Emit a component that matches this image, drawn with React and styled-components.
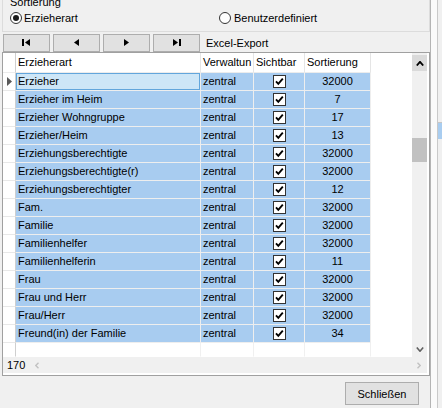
import React from "react";
import styled, { createGlobalStyle } from "styled-components";

const GlobalStyle = createGlobalStyle`
  html, body {
    margin: 0;
    padding: 0;
    background: #f0f0f0;
    font-family: "Liberation Sans", Arial, sans-serif;
    font-size: 11px;
    color: #000;
    overflow: hidden;
  }
`;

const Page = styled.div`
  display: flex;
  width: 442px;
  height: 408px;
  overflow: hidden;
`;

const Main = styled.div`
  width: 430px;
  display: flex;
  flex-direction: column;
`;

const SideStrip = styled.div`
  width: 12px;
  display: flex;
  border-left: 1px solid #b4b4b4;
  box-sizing: border-box;
`;

const StripLight = styled.div`
  width: 6px;
  background: #fafafa;
  border-right: 1px solid #c9c9c9;
`;

const StripRest = styled.div`
  flex: 1;
  background: #f0f0f0;
  padding-top: 122px;
`;

const StripSelection = styled.div`
  height: 16px;
  border-top: 1px solid #c6c6c6;
  background: #a9cdf0;
`;

const GroupBox = styled.div`
  margin-left: 2px;
  width: 428px;
  height: 32px;
  box-sizing: border-box;
  border: 1px solid #dcdcdc;
  border-top: none;
  padding-left: 7px;
  overflow: hidden;
`;

const GroupTitle = styled.div`
  line-height: 12px;
  margin-top: -4px;
`;

const RadioRow = styled.div`
  display: grid;
  grid-template-columns: 209px 1fr;
  margin-top: 4px;
  height: 12px;
`;

const RadioOption = styled.label`
  display: flex;
  align-items: center;
  gap: ${(p) => p.$gap}px;
  line-height: 12px;
`;

const RadioCircle = styled.span`
  width: 12px;
  height: 12px;
  box-sizing: border-box;
  border-radius: 50%;
  border: 1px solid #333;
  background: #fff;
  display: flex;
  align-items: center;
  justify-content: center;

  &::after {
    content: "";
    width: 6px;
    height: 6px;
    border-radius: 50%;
    background: ${(p) => (p.$checked ? "#1b1b1b" : "transparent")};
  }
`;

const NavRow = styled.div`
  display: flex;
  align-items: center;
  gap: 3px;
  height: 20px;
  padding: 1px 0 0 3px;
  box-sizing: border-box;
`;

const NavButton = styled.button`
  width: 47px;
  height: 18px;
  padding: 0;
  margin: 0;
  border: 1px solid #adadad;
  background: #e1e1e1;
  display: flex;
  align-items: center;
  justify-content: center;
`;

const ExportLabel = styled.span`
  margin-left: 3px;
  line-height: 18px;
`;

const GridFrame = styled.div`
  margin-left: 2px;
  width: 428px;
  height: 324px;
  box-sizing: border-box;
  border: 1px solid #a0a0a0;
  background: #fff;
  display: flex;
  flex-direction: column;
`;

const GridBody = styled.div`
  display: flex;
  height: 304px;
`;

const Table = styled.div`
  width: 409px;
  display: grid;
  grid-template-columns: 13px 185px 53px 51px 66px;
  grid-auto-rows: 18px;
  grid-template-rows: 20px;
  align-content: start;
`;

const HeaderCell = styled.div`
  box-sizing: border-box;
  border-right: 1px solid ${(p) => (p.$rowHead ? "#cfcfcf" : "#e5e5e5")};
  border-bottom: 1px solid #ececec;
  background: #fff;
  padding-left: 2px;
  line-height: 19px;
  white-space: nowrap;
  overflow: hidden;
`;

const RowHead = styled.div`
  box-sizing: border-box;
  border-right: 1px solid #cfcfcf;
  border-bottom: 1px solid ${(p) => (p.$empty ? "transparent" : "#e8e8e8")};
  background: #fff;
  display: flex;
  align-items: center;
  padding-left: 4px;
  height: ${(p) => (p.$empty ? "14px" : "auto")};
`;

const Cell = styled.div`
  box-sizing: border-box;
  border-right: 1px solid ${(p) => (p.$empty ? "#f0f0f0" : "#eeeeee")};
  border-bottom: 1px solid ${(p) => (p.$empty ? "transparent" : "#eeeeee")};
  background: ${(p) => (p.$empty ? "#fff" : p.$focus ? "#cde6f7" : "#a8ccf0")};
  box-shadow: ${(p) => (p.$focus ? "inset 0 0 0 1px #62a6dc" : "none")};
  padding: 0 2px;
  line-height: 17px;
  height: ${(p) => (p.$empty ? "14px" : "auto")};
  white-space: nowrap;
  overflow: hidden;
  display: flex;
  align-items: center;
  justify-content: ${(p) => (p.$align === "center" ? "center" : "flex-start")};
`;

const VScroll = styled.div`
  width: 15px;
  margin-right: 2px;
  background: #f0f0f0;
  display: flex;
  flex-direction: column;
  padding-top: 2px;
  box-sizing: border-box;
`;

const ScrollArrow = styled.div`
  height: 16px;
  display: flex;
  align-items: center;
  justify-content: center;
  background: ${(p) => (p.$hover ? "#dadada" : "transparent")};
`;

const Thumb = styled.div`
  margin-top: 67px;
  height: 24px;
  background: #c1c1c1;
`;

const Spacer = styled.div`
  flex: 1;
`;

const HBar = styled.div`
  height: 16px;
  margin-right: 2px;
  background: #f0f0f0;
  display: flex;
  align-items: center;
  padding: 0 6px 0 4px;
`;

const Count = styled.span`
  line-height: 16px;
  margin-right: 10px;
`;

const Footer = styled.div`
  display: flex;
  justify-content: flex-end;
  padding: 6px 11px 0 0;
`;

const CloseButton = styled.button`
  width: 74px;
  height: 23px;
  padding: 0;
  border: 1px solid #adadad;
  background: #e1e1e1;
  font-family: "Liberation Sans", Arial, sans-serif;
  font-size: 11px;
  color: #000;
`;

const rows = [
  ["Erzieher", 32000],
  ["Erzieher im Heim", 7],
  ["Erzieher Wohngruppe", 17],
  ["Erzieher/Heim", 13],
  ["Erziehungsberechtigte", 32000],
  ["Erziehungsberechtigte(r)", 32000],
  ["Erziehungsberechtigter", 12],
  ["Fam.", 32000],
  ["Familie", 32000],
  ["Familienhelfer", 32000],
  ["Familienhelferin", 11],
  ["Frau", 32000],
  ["Frau und Herr", 32000],
  ["Frau/Herr", 32000],
  ["Freund(in) der Familie", 34],
];

const NavIcon = ({ kind }) => {
  if (kind === "first")
    return (
      <svg width="9" height="7" viewBox="0 0 9 7">
        <rect x="0" y="0" width="2" height="7" fill="#000" />
        <polygon points="8,0 8,7 3,3.5" fill="#000" />
      </svg>
    );
  if (kind === "prev")
    return (
      <svg width="5" height="7" viewBox="0 0 5 7">
        <polygon points="5,0 5,7 0,3.5" fill="#000" />
      </svg>
    );
  if (kind === "next")
    return (
      <svg width="5" height="7" viewBox="0 0 5 7">
        <polygon points="0,0 0,7 5,3.5" fill="#000" />
      </svg>
    );
  return (
    <svg width="9" height="7" viewBox="0 0 9 7">
      <polygon points="1,0 1,7 6,3.5" fill="#000" />
      <rect x="7" y="0" width="2" height="7" fill="#000" />
    </svg>
  );
};

const CheckBox = () => (
  <svg width="13" height="13" viewBox="0 0 13 13">
    <rect x="0.5" y="0.5" width="12" height="12" fill="#fff" stroke="#333" />
    <path d="M3 6.3 L5.3 8.8 L9.8 3.6" fill="none" stroke="#000" strokeWidth="1.9" />
  </svg>
);

const Chevron = ({ dir, color, w = 7, h = 4, sw = 1.6 }) => {
  const d = {
    up: `M0.8 ${h - 0.5} L${w / 2} 0.8 L${w - 0.8} ${h - 0.5}`,
    down: `M0.8 0.5 L${w / 2} ${h - 0.8} L${w - 0.8} 0.5`,
    left: `M${w - 0.5} 0.8 L0.8 ${h / 2} L${w - 0.5} ${h - 0.8}`,
    right: `M0.5 0.8 L${w - 0.8} ${h / 2} L0.5 ${h - 0.8}`,
  }[dir];
  return (
    <svg width={w} height={h} viewBox={`0 0 ${w} ${h}`}>
      <path d={d} fill="none" stroke={color} strokeWidth={sw} />
    </svg>
  );
};

export default function App() {
  return (
    <Page>
      <GlobalStyle />
      <Main>
        <GroupBox>
          <GroupTitle>Sortierung</GroupTitle>
          <RadioRow>
            <RadioOption $gap={2}>
              <RadioCircle $checked />
              Erzieherart
            </RadioOption>
            <RadioOption $gap={3}>
              <RadioCircle />
              Benutzerdefiniert
            </RadioOption>
          </RadioRow>
        </GroupBox>

        <NavRow>
          <NavButton><NavIcon kind="first" /></NavButton>
          <NavButton><NavIcon kind="prev" /></NavButton>
          <NavButton><NavIcon kind="next" /></NavButton>
          <NavButton><NavIcon kind="last" /></NavButton>
          <ExportLabel>Excel-Export</ExportLabel>
        </NavRow>

        <GridFrame>
          <GridBody>
            <Table>
              <HeaderCell $rowHead />
              <HeaderCell>Erzieherart</HeaderCell>
              <HeaderCell>Verwaltun</HeaderCell>
              <HeaderCell>Sichtbar</HeaderCell>
              <HeaderCell>Sortierung</HeaderCell>
              {rows.map(([name, sort], i) => (
                <React.Fragment key={name}>
                  <RowHead>
                    {i === 0 && (
                      <svg width="5" height="9" viewBox="0 0 5 9">
                        <polygon points="0,0 5,4.5 0,9" fill="#5a5a5a" />
                      </svg>
                    )}
                  </RowHead>
                  <Cell $focus={i === 0}>{name}</Cell>
                  <Cell>zentral</Cell>
                  <Cell $align="center"><CheckBox /></Cell>
                  <Cell $align="center">{sort}</Cell>
                </React.Fragment>
              ))}
              <RowHead $empty />
              <Cell $empty />
              <Cell $empty />
              <Cell $empty />
              <Cell $empty />
            </Table>
            <VScroll>
              <ScrollArrow $hover><Chevron dir="up" color="#000" w={8} h={5} sw={1.8} /></ScrollArrow>
              <Thumb />
              <Spacer />
              <ScrollArrow><Chevron dir="down" color="#606060" w={8} h={5} sw={1.6} /></ScrollArrow>
            </VScroll>
          </GridBody>
          <HBar>
            <Count>170</Count>
            <Chevron dir="left" color="#c2c2c2" w={4} h={7} sw={1.4} />
            <Spacer />
            <Chevron dir="right" color="#c2c2c2" w={4} h={7} sw={1.4} />
          </HBar>
        </GridFrame>

        <Footer>
          <CloseButton>Schließen</CloseButton>
        </Footer>
      </Main>
      <SideStrip>
        <StripLight />
        <StripRest>
          <StripSelection />
        </StripRest>
      </SideStrip>
    </Page>
  );
}
